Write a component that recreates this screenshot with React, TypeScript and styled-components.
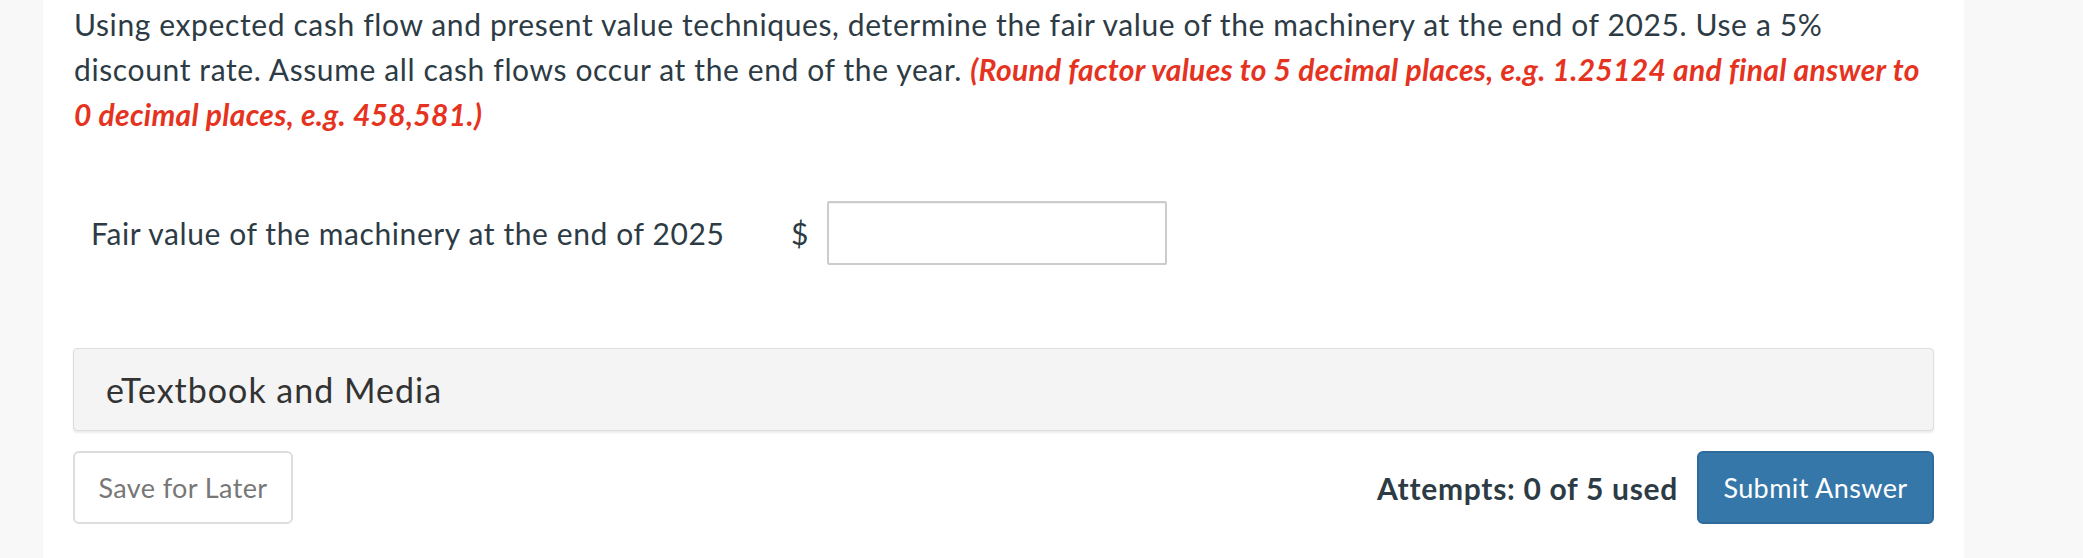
import React from "react";
import styled, { createGlobalStyle } from "styled-components";

const Global = createGlobalStyle`
  html, body {
    margin: 0;
    padding: 0;
    background: #f8f8f8;
  }
  body {
    font-family: Lato, "Open Sans", sans-serif;
    color: #2d3b45;
  }
`;

const Page = styled.div`
  margin-left: 43px;
  width: 1921px;
  min-height: 558px;
  background: #ffffff;
  box-sizing: border-box;
  padding: 2px 30px 0 30px;
`;

const Question = styled.p`
  margin: 0;
  padding-left: 1px;
  font-size: 30px;
  letter-spacing: 0.62px;
  line-height: 45px;
  color: #2d3b45;
  width: 1850px;
`;

const Hint = styled.em`
  font-style: italic;
  font-weight: 700;
  color: #e5331f;
  letter-spacing: 0.3px;
`;

const AnswerRow = styled.div`
  display: flex;
  align-items: center;
  margin-top: 64px;
  padding-left: 18px;
`;

const Label = styled.span`
  width: 700px;
  font-size: 30px;
  letter-spacing: 0.6px;
  color: #2d3b45;
`;

const Currency = styled.span`
  font-size: 30px;
  color: #2d3b45;
  width: 36px;
`;

const AmountInput = styled.input`
  width: 340px;
  height: 64px;
  box-sizing: border-box;
  border: 2px solid #cccccc;
  border-radius: 2px;
  background: #fff;
  box-shadow: inset 0 1px 1px rgba(0, 0, 0, 0.06);
  font-family: Lato, sans-serif;
  font-size: 26px;
  padding: 0 12px;
  outline: none;
`;

const MediaPanel = styled.div`
  margin-top: 83px;
  height: 83px;
  box-sizing: border-box;
  background: #f4f4f4;
  border: 1px solid #dddddd;
  border-radius: 4px;
  box-shadow: 0 2px 2px rgba(0, 0, 0, 0.08);
  display: flex;
  align-items: center;
  padding-left: 32px;
  font-size: 34px;
  letter-spacing: 1px;
  color: #333333;
`;

const ActionRow = styled.div`
  display: flex;
  align-items: center;
  margin-top: 20px;
`;

const Spacer = styled.div`
  flex: 1;
`;

const Button = styled.button<{ $primary?: boolean }>`
  height: 73px;
  box-sizing: border-box;
  border-radius: 6px;
  font-family: Lato, sans-serif;
  font-size: 27px;
  letter-spacing: 0.4px;
  cursor: pointer;
  border: 2px solid ${(p) => (p.$primary ? "#2e6a9b" : "#dddddd")};
  background: ${(p) => (p.$primary ? "#3677a9" : "#ffffff")};
  color: ${(p) => (p.$primary ? "#ffffff" : "#777777")};
  width: ${(p) => (p.$primary ? "237px" : "220px")};
  padding: 0;
`;

const Attempts = styled.span`
  font-size: 30px;
  letter-spacing: 0.7px;
  font-weight: 700;
  color: #2d3b45;
  margin-right: 19px;
`;

export default function App() {
  return (
    <>
      <Global />
      <Page>
        <Question>
          Using expected cash flow and present value techniques, determine the
          fair value of the machinery at the end of 2025. Use a 5% discount
          rate. Assume all cash flows occur at the end of the year.{" "}
          <Hint>
            (Round factor values to 5 decimal places, e.g. 1.25124 and final
            answer to 0 decimal places, e.g. 458,581.)
          </Hint>
        </Question>
        <AnswerRow>
          <Label>Fair value of the machinery at the end of 2025</Label>
          <Currency>$</Currency>
          <AmountInput type="text" aria-label="Fair value" />
        </AnswerRow>
        <MediaPanel>eTextbook and Media</MediaPanel>
        <ActionRow>
          <Button>Save for Later</Button>
          <Spacer />
          <Attempts>Attempts: 0 of 5 used</Attempts>
          <Button $primary>Submit Answer</Button>
        </ActionRow>
      </Page>
    </>
  );
}
